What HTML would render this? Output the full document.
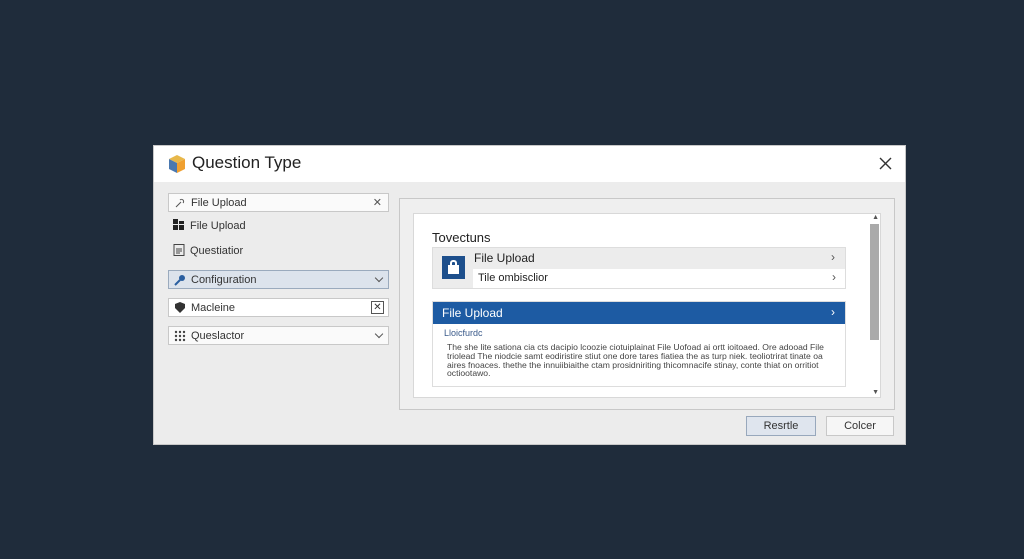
<!DOCTYPE html>
<html><head><style>
*{box-sizing:border-box;margin:0;padding:0}
body{width:1024px;height:559px;background:#1f2c3b;font-family:"Liberation Sans",sans-serif;position:relative;overflow:hidden;color:#222}
.dlg{position:absolute;left:153px;top:145px;width:753px;height:300px;background:#ececec;border:1px solid #c8c8c8}
.tb{position:absolute;left:0;top:0;width:751px;height:36px;background:#fff}
.tb .t{position:absolute;left:38px;top:7px;font-size:17px;color:#222}
.it{position:absolute;left:14px;width:221px;height:19px;font-size:11px;color:#333;display:flex;align-items:center;padding-left:22px}
.box{background:#fafafa;border:1px solid #c8c8c8}
.ic{position:absolute;left:5px;top:3px;width:12px;height:12px}
.r{position:absolute;right:6px;top:2px;font-size:11px;color:#555}
.chev{position:absolute;right:6px;top:4px;width:6px;height:6px;border-right:1px solid #555;border-bottom:1px solid #555;transform:rotate(45deg)}
.outer{position:absolute;left:245px;top:52px;width:496px;height:212px;border:1px solid #c8c8c8;background:#efefef}
.inner{position:absolute;left:13px;top:14px;width:468px;height:185px;background:#fff;border:1px solid #d8d8d8}
.btn{position:absolute;top:270px;height:20px;width:70px;font-size:11px;color:#333;display:flex;align-items:center;justify-content:center;border:1px solid #c8c8c8;background:#f6f6f6}
</style></head><body>
<div class="dlg">
 <div class="tb">
  <svg style="position:absolute;left:13px;top:8px" width="20" height="20" viewBox="0 0 20 20"><polygon points="10,1 18,5 10,9 2,5" fill="#e8b84a"/><polygon points="2,5 10,9 10,19 2,15" fill="#4a78b0"/><polygon points="18,5 10,9 10,19 18,15" fill="#f0a030"/></svg>
  <div class="t">Question Type</div>
  <svg style="position:absolute;left:725px;top:11px" width="13" height="13" viewBox="0 0 13 13"><path d="M1 1L12 12M12 1L1 12" stroke="#333" stroke-width="1.4"/></svg>
 </div>
 <div class="it box" style="top:47px">
  <svg class="ic" viewBox="0 0 12 12"><path d="M2 10 L7 5 M6 3 a2 2 0 1 1 3 3" stroke="#555" fill="none"/></svg>File Upload<span class="r">✕</span></div>
 <div class="it" style="top:70px"><svg class="ic" viewBox="0 0 12 12"><rect x="0" y="0" width="5" height="5" fill="#222"/><rect x="6" y="2" width="5" height="3" fill="#222"/><rect x="0" y="6" width="5" height="5" fill="#222"/><rect x="6" y="6" width="5" height="5" fill="#222"/></svg>File Upload</div>
 <div class="it" style="top:95px"><svg class="ic" viewBox="0 0 12 12"><rect x="1" y="0.5" width="10" height="11" fill="none" stroke="#444"/><path d="M3 5h6M3 7h6M3 9h4" stroke="#444"/></svg>Questiatior</div>
 <div class="it" style="top:124px;background:#dce3ec;border:1px solid #9aaabd"><svg class="ic" viewBox="0 0 12 12"><path d="M1 11 L6 6" stroke="#2a5fa0" stroke-width="2"/><circle cx="8" cy="4" r="3" fill="#2a5fa0"/></svg>Configuration<span class="chev"></span></div>
 <div class="it" style="top:152px;background:#fff;border:1px solid #c8c8c8"><svg class="ic" viewBox="0 0 12 12"><path d="M6 11 L1 6 V2 L6 0 L11 2 V6 Z" fill="#333"/></svg>Macleine<span style="position:absolute;right:4px;top:2px;width:13px;height:13px;border:1px solid #555;font-size:10px;line-height:11px;text-align:center">✕</span></div>
 <div class="it box" style="top:180px"><svg class="ic" viewBox="0 0 12 12" fill="#444"><circle cx="2" cy="2" r="1.2"/><circle cx="6" cy="2" r="1.2"/><circle cx="10" cy="2" r="1.2"/><circle cx="2" cy="6" r="1.2"/><circle cx="6" cy="6" r="1.2"/><circle cx="10" cy="6" r="1.2"/><circle cx="2" cy="10" r="1.2"/><circle cx="6" cy="10" r="1.2"/><circle cx="10" cy="10" r="1.2"/></svg>Queslactor<span class="chev"></span></div>

 <div class="outer">
  <div class="inner">
   <div style="position:absolute;left:18px;top:16px;font-size:13px">Tovectuns</div>
   <div style="position:absolute;left:18px;top:33px;width:414px;height:42px;background:#ececec;border:1px solid #ddd">
    <div style="position:absolute;left:9px;top:8px;width:23px;height:23px;background:#1d4f8c"><div style="position:absolute;left:6px;top:9px;width:11px;height:9px;background:#fff"></div><div style="position:absolute;left:8px;top:4px;width:7px;height:7px;border:2px solid #fff;border-bottom:none;border-radius:3px 3px 0 0"></div></div>
    <div style="position:absolute;left:41px;top:3px;font-size:12px">File Upload</div>
    <div style="position:absolute;right:10px;top:2px;font-size:12px;color:#555">›</div>
    <div style="position:absolute;left:40px;top:21px;width:372px;height:19px;background:#fff;font-size:11px;padding:3px 5px">Tile ombisclior<span style="position:absolute;right:9px;top:1px;font-size:12px;color:#555">›</span></div>
   </div>
   <div style="position:absolute;left:18px;top:87px;width:414px;height:86px;border:1px solid #ddd">
    <div style="height:22px;background:#1d5ba3;color:#fff;font-size:12px;padding:4px 9px;position:relative">File Upload<span style="position:absolute;right:10px;top:3px">›</span></div>
    <div style="font-size:9px;color:#3a5a8a;padding:4px 11px 0">Lloicfurdc</div>
    <div style="font-size:8.6px;color:#444;line-height:8.8px;padding:5px 14px 0">The she lite sationa cia cts dacipio lcoozie ciotuiplainat File Uofoad ai ortt ioitoaed. Ore adooad File triolead The niodcie samt eodiristire stiut one dore tares fiatiea the as turp niek. teoliotrirat tinate oa aires fnoaces. thethe the innuiibiaithe ctam prosidniriting thicomnacife stinay, conte thiat on orritiot octiootawo.</div>
   </div>
   <div style="position:absolute;right:1px;top:10px;width:9px;height:116px;background:#aaa"></div>
   <div style="position:absolute;right:1px;top:0;font-size:7px;color:#555">▲</div>
   <div style="position:absolute;right:1px;bottom:1px;font-size:7px;color:#555">▼</div>
  </div>
 </div>
 <div class="btn" style="left:592px;background:#dfe5ee;border-color:#98a8bc">Resrtle</div>
 <div class="btn" style="left:672px;width:68px">Colcer</div>
</div>
</body></html>
